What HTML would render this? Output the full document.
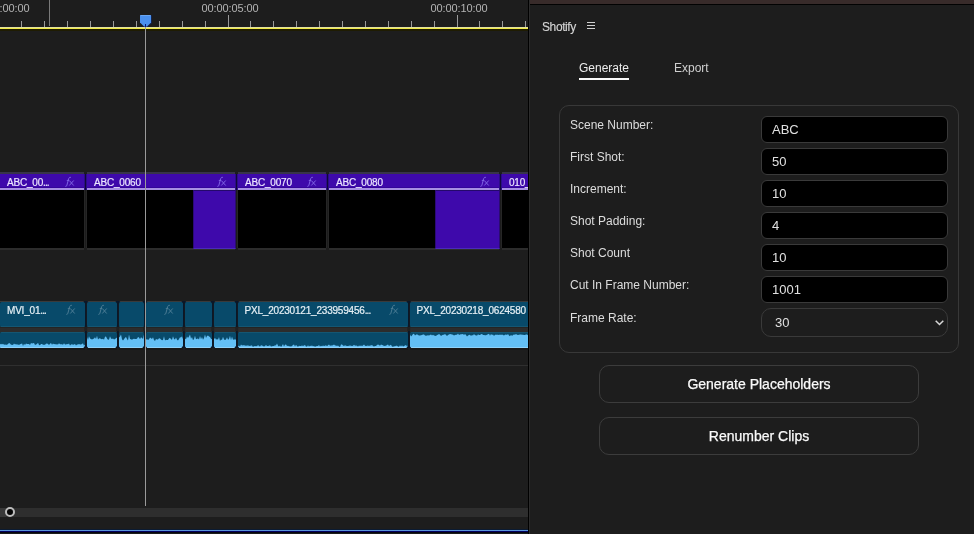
<!DOCTYPE html>
<html><head><meta charset="utf-8">
<style>
*{margin:0;padding:0;box-sizing:border-box}
html,body{width:974px;height:534px;overflow:hidden;background:#1d1d1d;font-family:"Liberation Sans",sans-serif}
.a{position:absolute}
#left{position:absolute;left:0;top:0;width:528px;height:534px;background:#1d1d1d;overflow:hidden}
.tc{position:absolute;top:1px;font-size:11px;letter-spacing:-0.1px;color:#b4b4b4;white-space:nowrap;line-height:14px}
.tick{position:absolute;top:21px;width:1px;height:6px;background:#9a9a9a}
.yl{position:absolute;left:0;top:27px;width:528px;height:2px;background:#f0eb48;border-top:1px solid #e2e0a0}
.yl2{position:absolute;left:0;top:29px;width:528px;height:2px;background:#1f1c02}
.vclip{position:absolute;top:172px;height:78px}
.vh{position:absolute;left:0;right:0;top:0;height:2px;background:#38344a}
.vhead{position:absolute;left:0;right:0;top:2px;height:14px;background:#3e09ab;border-bottom:1px solid #34049a}
.vstripe{position:absolute;left:0;right:0;top:16px;height:2px;background:#a78fe2}
.vbody{position:absolute;left:0;right:0;top:18px;height:58px;background:#000}
.vbot{position:absolute;left:0;right:0;top:76px;height:2px;background:#2c2c2c}
.lbl{position:absolute;top:4px;font-size:10px;color:#ece6ff;-webkit-text-stroke:0.2px #ece6ff;white-space:nowrap;line-height:13px;letter-spacing:-0.2px}.dots{letter-spacing:-0.9px}
.fx{position:absolute;top:2px;font-style:italic;font-size:11px;line-height:14px;color:#7c66cc}
.vsep{position:absolute;top:172px;height:78px;width:3px;background:#1d1d1d}.vs1{position:absolute;left:0;top:2px;width:3px;height:16px;background:#2a0d86}.vs1:after{content:"";position:absolute;left:1px;top:0;width:1px;height:16px;background:#12073a}.vs2{position:absolute;left:0;top:18px;width:3px;height:58px;background:#262626}.vs2:after{content:"";position:absolute;left:1px;top:0;width:1px;height:58px;background:#1c1c1c}
.aclip{position:absolute;top:301px;height:48px}
.atop{position:absolute;left:0;right:0;top:0;height:1px;background:#3a3a3a}
.ahead{position:absolute;left:0;right:0;top:1px;height:25px;background:#084a6a;border-bottom:1px solid #155672;border-radius:1.5px}
.agap{position:absolute;left:0;right:0;top:26px;height:5px;background:#2c2c2c;border-top:1px solid #242424}
.awave{position:absolute;left:0;right:0;top:31px;height:16px;background:#084a6a;overflow:hidden;border-top:1px solid #155672;border-radius:1.5px}.abot{position:absolute;left:0;right:0;top:47px;height:2px;background:#181818}
.alb{position:absolute;top:3px;font-size:10px;color:#e6f0f5;-webkit-text-stroke:0.2px #e6f0f5;white-space:nowrap;line-height:13px;letter-spacing:-0.2px}
.afx{position:absolute;top:3px;font-style:italic;font-size:11px;line-height:14px;color:#5a8aa3}
.asep{position:absolute;top:301px;height:47px;width:2px;background:#0b1a2c}
.lab{position:absolute;left:42px;font-size:12px;color:#dcdcdc;line-height:14px;white-space:nowrap}
.inp{position:absolute;left:233px;width:187px;height:27px;background:#000;border:1px solid #3a3a3a;border-radius:6px;font-size:13px;color:#e0e0e0;padding-left:10px;line-height:25px}
.btn{position:absolute;left:71px;width:320px;height:38px;border:1px solid #3c3c3c;border-radius:10px;font-size:14px;color:#fafafa;-webkit-text-stroke:0.25px #fafafa;text-align:center;line-height:36px}
</style></head><body><div id="root" style="position:absolute;left:0;top:0;width:974px;height:534px;will-change:transform;background:#1d1d1d">
<div id="left">
  <div class="tc" style="left:-27.6px">00:00:00:00</div>
  <div class="tc" style="left:201.5px">00:00:05:00</div>
  <div class="tc" style="left:430.5px">00:00:10:00</div>
  <div class="tick" style="left:21px;"></div><div class="tick" style="left:44px;"></div><div class="tick" style="left:67px;"></div><div class="tick" style="left:90px;"></div><div class="tick" style="left:113px;"></div><div class="tick" style="left:136px;"></div><div class="tick" style="left:159px;"></div><div class="tick" style="left:182px;"></div><div class="tick" style="left:205px;"></div><div class="tick" style="left:228px;top:15px;height:12px;"></div><div class="tick" style="left:250px;"></div><div class="tick" style="left:273px;"></div><div class="tick" style="left:296px;"></div><div class="tick" style="left:319px;"></div><div class="tick" style="left:342px;"></div><div class="tick" style="left:365px;"></div><div class="tick" style="left:388px;"></div><div class="tick" style="left:411px;"></div><div class="tick" style="left:434px;"></div><div class="tick" style="left:457px;top:15px;height:12px;"></div><div class="tick" style="left:479px;"></div><div class="tick" style="left:502px;"></div><div class="tick" style="left:525px;"></div>
  <div class="a" style="left:49px;top:0;width:1px;height:26px;background:#7a7a7a"></div>
  <div class="yl"></div><div class="yl2"></div>
  <div class="vclip" style="left:0px;width:84px"><div class="vh"></div><div class="vhead"></div><div class="vstripe"></div><div class="vbody"></div><div class="vbot"></div><div class="lbl" style="left:7px">ABC_00<span class="dots">...</span></div><svg class="a" style="left:64.0px;top:4px" width="11" height="12" viewBox="0 0 11 12"><path d="M6.9 1.3 Q5.2 0.9 4.7 2.6 L2.9 9.2 Q2.5 10.6 1.4 10.4 M2.8 4.4 H5 M5.3 4.5 L9.7 9.5 M9.7 4.5 L5.3 9.5" stroke="#8266e6" stroke-width="0.95" fill="none"/></svg></div><div class="vclip" style="left:87px;width:148px"><div class="vh"></div><div class="vhead"></div><div class="vstripe"></div><div class="vbody"></div><div class="vbot"></div><div class="lbl" style="left:7px">ABC_0060</div><svg class="a" style="left:128.5px;top:4px" width="11" height="12" viewBox="0 0 11 12"><path d="M6.9 1.3 Q5.2 0.9 4.7 2.6 L2.9 9.2 Q2.5 10.6 1.4 10.4 M2.8 4.4 H5 M5.3 4.5 L9.7 9.5 M9.7 4.5 L5.3 9.5" stroke="#8266e6" stroke-width="0.95" fill="none"/></svg></div><div class="vclip" style="left:238px;width:88px"><div class="vh"></div><div class="vhead"></div><div class="vstripe"></div><div class="vbody"></div><div class="vbot"></div><div class="lbl" style="left:7px">ABC_0070</div><svg class="a" style="left:67.9px;top:4px" width="11" height="12" viewBox="0 0 11 12"><path d="M6.9 1.3 Q5.2 0.9 4.7 2.6 L2.9 9.2 Q2.5 10.6 1.4 10.4 M2.8 4.4 H5 M5.3 4.5 L9.7 9.5 M9.7 4.5 L5.3 9.5" stroke="#8266e6" stroke-width="0.95" fill="none"/></svg></div><div class="vclip" style="left:329px;width:170px"><div class="vh"></div><div class="vhead"></div><div class="vstripe"></div><div class="vbody"></div><div class="vbot"></div><div class="lbl" style="left:7px">ABC_0080</div><svg class="a" style="left:150.0px;top:4px" width="11" height="12" viewBox="0 0 11 12"><path d="M6.9 1.3 Q5.2 0.9 4.7 2.6 L2.9 9.2 Q2.5 10.6 1.4 10.4 M2.8 4.4 H5 M5.3 4.5 L9.7 9.5 M9.7 4.5 L5.3 9.5" stroke="#8266e6" stroke-width="0.95" fill="none"/></svg></div><div class="vclip" style="left:502px;width:38px"><div class="vh"></div><div class="vhead"></div><div class="vstripe"></div><div class="vbody"></div><div class="vbot"></div><div class="lbl" style="left:7px">010_0090</div></div><div class="vsep" style="left:84px"><div class="vs1"></div><div class="vs2"></div></div><div class="vsep" style="left:235px"><div class="vs1"></div><div class="vs2"></div></div><div class="vsep" style="left:326px"><div class="vs1"></div><div class="vs2"></div></div><div class="vsep" style="left:499px"><div class="vs1"></div><div class="vs2"></div></div><div class="a" style="left:193px;top:190px;width:43px;height:59px;background:#3e09ab;border-left:1px solid #2c0a78;border-top:1px solid #24086a;border-right:1px solid #2a0c70;border-bottom:1px solid #4a2abb"></div><div class="a" style="left:435px;top:190px;width:65px;height:59px;background:#3e09ab;border-left:1px solid #2c0a78;border-top:1px solid #24086a;border-right:1px solid #2a0c70;border-bottom:1px solid #4a2abb"></div>
  <div class="aclip" style="left:0.0px;width:85.0px"><div class="atop"></div><div class="ahead"></div><div class="agap"></div><div class="awave"><svg width="85.0" height="16" style="position:absolute;left:0;top:-1px"><path d="M0 16 L0.0 12.4 L1.0 11.7 L2.0 12.4 L3.0 11.7 L4.0 12.7 L5.0 12.6 L6.0 12.8 L7.0 12.7 L8.0 12.1 L9.0 10.9 L10.0 11.6 L11.0 12.8 L12.0 12.8 L13.0 13.1 L14.0 11.6 L15.0 12.4 L16.0 12.1 L17.0 12.7 L18.0 12.2 L19.0 13.3 L20.0 12.0 L21.0 12.2 L22.0 11.3 L23.0 13.9 L24.0 11.7 L25.0 13.0 L26.0 11.6 L27.0 12.0 L28.0 12.0 L29.0 12.1 L30.0 13.0 L31.0 11.1 L32.0 11.6 L33.0 11.2 L34.0 11.0 L35.0 13.0 L36.0 12.6 L37.0 11.9 L38.0 10.8 L39.0 13.1 L40.0 13.2 L41.0 11.9 L42.0 12.1 L43.0 12.7 L44.0 12.7 L45.0 12.8 L46.0 11.8 L47.0 11.6 L48.0 12.1 L49.0 13.0 L50.0 11.8 L51.0 11.0 L52.0 12.7 L53.0 11.5 L54.0 12.3 L55.0 12.1 L56.0 12.6 L57.0 12.3 L58.0 12.6 L59.0 11.3 L60.0 12.3 L61.0 12.3 L62.0 12.3 L63.0 12.7 L64.0 11.3 L65.0 12.6 L66.0 12.4 L67.0 12.0 L68.0 12.2 L69.0 11.4 L70.0 13.5 L71.0 12.4 L72.0 12.3 L73.0 12.7 L74.0 12.6 L75.0 12.1 L76.0 13.5 L77.0 12.4 L78.0 12.5 L79.0 12.1 L80.0 12.6 L81.0 12.5 L82.0 12.1 L83.0 11.3 L84.0 13.7 L85.0 12.4 L85 16 Z" fill="#63bff5"/><rect x="0" y="15" width="85.0" height="1" fill="#8fd2fa"/></svg></div><div class="abot"></div><div class="alb" style="left:7px">MVI_01<span class="dots">...</span></div><svg class="a" style="left:65.4px;top:3.4px" width="11" height="12" viewBox="0 0 11 12"><path d="M6.9 1.3 Q5.2 0.9 4.7 2.6 L2.9 9.2 Q2.5 10.6 1.4 10.4 M2.8 4.4 H5 M5.3 4.5 L9.7 9.5 M9.7 4.5 L5.3 9.5" stroke="#4e7d96" stroke-width="0.95" fill="none"/></svg></div><div class="aclip" style="left:86.5px;width:30.5px"><div class="atop"></div><div class="ahead"></div><div class="agap"></div><div class="awave"><svg width="30.5" height="16" style="position:absolute;left:0;top:-1px"><path d="M0 16 L0.0 5.0 L1.0 7.9 L2.0 4.2 L3.0 6.6 L4.0 7.1 L5.0 7.6 L6.0 7.0 L7.0 6.6 L8.0 5.3 L9.0 6.9 L10.0 3.8 L11.0 7.4 L12.0 6.4 L13.0 6.3 L14.0 7.1 L15.0 7.3 L16.0 6.7 L17.0 7.7 L18.0 4.7 L19.0 4.4 L20.0 6.5 L21.0 7.7 L22.0 7.6 L23.0 4.3 L24.0 6.6 L25.0 7.1 L26.0 6.6 L27.0 7.4 L28.0 7.1 L29.0 6.3 L30.0 5.6 L30 16 Z" fill="#63bff5"/><rect x="0" y="15" width="30.5" height="1" fill="#8fd2fa"/></svg></div><div class="abot"></div><svg class="a" style="left:10.6px;top:3.4px" width="11" height="12" viewBox="0 0 11 12"><path d="M6.9 1.3 Q5.2 0.9 4.7 2.6 L2.9 9.2 Q2.5 10.6 1.4 10.4 M2.8 4.4 H5 M5.3 4.5 L9.7 9.5 M9.7 4.5 L5.3 9.5" stroke="#4e7d96" stroke-width="0.95" fill="none"/></svg></div><div class="aclip" style="left:118.5px;width:25.5px"><div class="atop"></div><div class="ahead"></div><div class="agap"></div><div class="awave"><svg width="25.5" height="16" style="position:absolute;left:0;top:-1px"><path d="M0 16 L0.0 5.5 L1.0 4.5 L2.0 2.5 L3.0 7.3 L4.0 8.5 L5.0 7.3 L6.0 5.7 L7.0 5.1 L8.0 7.1 L9.0 8.6 L10.0 2.5 L11.0 7.0 L12.0 7.3 L13.0 7.8 L14.0 6.9 L15.0 6.8 L16.0 7.1 L17.0 7.1 L18.0 6.8 L19.0 5.1 L20.0 5.4 L21.0 7.2 L22.0 5.2 L23.0 5.9 L24.0 7.1 L25.0 2.6 L25 16 Z" fill="#63bff5"/><rect x="0" y="15" width="25.5" height="1" fill="#8fd2fa"/></svg></div><div class="abot"></div></div><div class="aclip" style="left:145.5px;width:37.5px"><div class="atop"></div><div class="ahead"></div><div class="agap"></div><div class="awave"><svg width="37.5" height="16" style="position:absolute;left:0;top:-1px"><path d="M0 16 L0.0 7.7 L1.0 6.9 L2.0 7.9 L3.0 7.3 L4.0 5.4 L5.0 6.3 L6.0 7.0 L7.0 5.3 L8.0 7.9 L9.0 9.1 L10.0 7.1 L11.0 7.5 L12.0 7.5 L13.0 6.2 L14.0 6.4 L15.0 7.6 L16.0 8.3 L17.0 7.9 L18.0 4.3 L19.0 8.6 L20.0 7.8 L21.0 8.0 L22.0 8.1 L23.0 6.4 L24.0 5.8 L25.0 7.3 L26.0 7.7 L27.0 4.2 L28.0 6.9 L29.0 7.4 L30.0 5.6 L31.0 7.8 L32.0 8.4 L33.0 7.1 L34.0 5.2 L35.0 5.4 L36.0 4.3 L37.0 7.3 L37 16 Z" fill="#63bff5"/><rect x="0" y="15" width="37.5" height="1" fill="#8fd2fa"/></svg></div><div class="abot"></div><svg class="a" style="left:17.7px;top:3.4px" width="11" height="12" viewBox="0 0 11 12"><path d="M6.9 1.3 Q5.2 0.9 4.7 2.6 L2.9 9.2 Q2.5 10.6 1.4 10.4 M2.8 4.4 H5 M5.3 4.5 L9.7 9.5 M9.7 4.5 L5.3 9.5" stroke="#4e7d96" stroke-width="0.95" fill="none"/></svg></div><div class="aclip" style="left:184.5px;width:27.5px"><div class="atop"></div><div class="ahead"></div><div class="agap"></div><div class="awave"><svg width="27.5" height="16" style="position:absolute;left:0;top:-1px"><path d="M0 16 L0.0 6.6 L1.0 7.3 L2.0 4.6 L3.0 6.1 L4.0 4.4 L5.0 2.5 L6.0 6.8 L7.0 5.1 L8.0 8.3 L9.0 6.9 L10.0 3.8 L11.0 7.2 L12.0 6.7 L13.0 6.6 L14.0 7.4 L15.0 3.9 L16.0 7.2 L17.0 5.0 L18.0 7.7 L19.0 6.1 L20.0 2.6 L21.0 6.0 L22.0 4.0 L23.0 3.6 L24.0 4.5 L25.0 5.0 L26.0 6.8 L27.0 7.2 L27 16 Z" fill="#63bff5"/><rect x="0" y="15" width="27.5" height="1" fill="#8fd2fa"/></svg></div><div class="abot"></div></div><div class="aclip" style="left:213.5px;width:22.5px"><div class="atop"></div><div class="ahead"></div><div class="agap"></div><div class="awave"><svg width="22.5" height="16" style="position:absolute;left:0;top:-1px"><path d="M0 16 L0.0 7.3 L1.0 5.7 L2.0 7.7 L3.0 7.0 L4.0 7.8 L5.0 5.0 L6.0 9.0 L7.0 7.4 L8.0 7.9 L9.0 4.8 L10.0 7.4 L11.0 8.1 L12.0 7.5 L13.0 5.2 L14.0 7.8 L15.0 6.9 L16.0 3.7 L17.0 8.3 L18.0 4.5 L19.0 7.7 L20.0 7.6 L21.0 7.4 L22.0 7.4 L22 16 Z" fill="#63bff5"/><rect x="0" y="15" width="22.5" height="1" fill="#8fd2fa"/></svg></div><div class="abot"></div></div><div class="aclip" style="left:237.5px;width:170.5px"><div class="atop"></div><div class="ahead"></div><div class="agap"></div><div class="awave"><svg width="170.5" height="16" style="position:absolute;left:0;top:-1px"><path d="M0 16 L0.0 14.2 L1.0 13.4 L2.0 14.6 L3.0 12.6 L4.0 13.6 L5.0 13.3 L6.0 13.3 L7.0 13.6 L8.0 13.7 L9.0 13.5 L10.0 13.5 L11.0 13.8 L12.0 14.0 L13.0 13.5 L14.0 13.5 L15.0 15.0 L16.0 13.9 L17.0 14.3 L18.0 14.1 L19.0 14.2 L20.0 13.0 L21.0 13.9 L22.0 14.4 L23.0 13.3 L24.0 13.6 L25.0 14.1 L26.0 14.5 L27.0 13.9 L28.0 12.9 L29.0 14.1 L30.0 14.0 L31.0 13.7 L32.0 13.2 L33.0 14.5 L34.0 14.3 L35.0 14.0 L36.0 14.0 L37.0 13.3 L38.0 13.6 L39.0 11.6 L40.0 13.8 L41.0 14.6 L42.0 13.6 L43.0 15.0 L44.0 13.7 L45.0 12.1 L46.0 14.4 L47.0 12.7 L48.0 12.6 L49.0 14.0 L50.0 13.8 L51.0 14.3 L52.0 14.2 L53.0 14.6 L54.0 13.9 L55.0 13.1 L56.0 12.5 L57.0 14.5 L58.0 12.8 L59.0 14.0 L60.0 14.8 L61.0 13.7 L62.0 14.0 L63.0 13.9 L64.0 13.5 L65.0 13.9 L66.0 13.4 L67.0 13.1 L68.0 14.5 L69.0 14.5 L70.0 13.2 L71.0 14.4 L72.0 13.8 L73.0 14.1 L74.0 13.6 L75.0 14.2 L76.0 13.9 L77.0 14.7 L78.0 14.3 L79.0 14.1 L80.0 13.9 L81.0 13.0 L82.0 14.5 L83.0 13.7 L84.0 14.2 L85.0 13.4 L86.0 14.0 L87.0 13.7 L88.0 13.2 L89.0 14.3 L90.0 13.2 L91.0 12.5 L92.0 13.7 L93.0 13.5 L94.0 13.4 L95.0 13.2 L96.0 12.5 L97.0 13.6 L98.0 13.5 L99.0 14.0 L100.0 13.6 L101.0 14.4 L102.0 14.9 L103.0 12.5 L104.0 12.4 L105.0 13.5 L106.0 14.0 L107.0 13.3 L108.0 13.8 L109.0 13.9 L110.0 14.0 L111.0 13.7 L112.0 13.5 L113.0 13.8 L114.0 14.0 L115.0 13.7 L116.0 12.7 L117.0 13.7 L118.0 13.6 L119.0 13.8 L120.0 14.4 L121.0 13.4 L122.0 13.9 L123.0 13.5 L124.0 14.0 L125.0 13.5 L126.0 12.6 L127.0 13.7 L128.0 13.9 L129.0 13.7 L130.0 13.6 L131.0 14.0 L132.0 13.5 L133.0 13.5 L134.0 13.1 L135.0 14.1 L136.0 14.5 L137.0 13.9 L138.0 13.9 L139.0 12.9 L140.0 12.6 L141.0 12.9 L142.0 13.7 L143.0 12.6 L144.0 12.9 L145.0 13.2 L146.0 14.1 L147.0 13.7 L148.0 13.7 L149.0 12.9 L150.0 12.5 L151.0 13.9 L152.0 13.2 L153.0 12.7 L154.0 14.4 L155.0 14.7 L156.0 14.2 L157.0 14.3 L158.0 13.8 L159.0 13.7 L160.0 14.4 L161.0 14.8 L162.0 13.2 L163.0 14.6 L164.0 13.2 L165.0 14.6 L166.0 14.0 L167.0 13.6 L168.0 13.1 L169.0 14.4 L170.0 13.4 L170 16 Z" fill="#63bff5"/><rect x="0" y="15" width="170.5" height="1" fill="#8fd2fa"/></svg></div><div class="abot"></div><div class="alb" style="left:7px">PXL_20230121_233959456<span class="dots">...</span></div><svg class="a" style="left:150.7px;top:3.4px" width="11" height="12" viewBox="0 0 11 12"><path d="M6.9 1.3 Q5.2 0.9 4.7 2.6 L2.9 9.2 Q2.5 10.6 1.4 10.4 M2.8 4.4 H5 M5.3 4.5 L9.7 9.5 M9.7 4.5 L5.3 9.5" stroke="#4e7d96" stroke-width="0.95" fill="none"/></svg></div><div class="aclip" style="left:409.5px;width:130.5px"><div class="atop"></div><div class="ahead"></div><div class="agap"></div><div class="awave"><svg width="130.5" height="16" style="position:absolute;left:0;top:-1px"><path d="M0 16 L0.0 2.6 L1.0 4.5 L2.0 3.5 L3.0 1.9 L4.0 1.7 L5.0 3.4 L6.0 2.8 L7.0 2.3 L8.0 3.0 L9.0 3.4 L10.0 3.5 L11.0 3.2 L12.0 3.1 L13.0 2.5 L14.0 2.6 L15.0 3.6 L16.0 3.7 L17.0 3.4 L18.0 3.2 L19.0 3.6 L20.0 3.0 L21.0 2.4 L22.0 3.4 L23.0 2.8 L24.0 3.5 L25.0 3.8 L26.0 4.1 L27.0 3.1 L28.0 2.7 L29.0 2.1 L30.0 2.8 L31.0 4.0 L32.0 3.2 L33.0 2.8 L34.0 2.7 L35.0 2.0 L36.0 3.0 L37.0 3.9 L38.0 3.0 L39.0 2.5 L40.0 1.9 L41.0 2.3 L42.0 2.6 L43.0 2.7 L44.0 3.5 L45.0 2.9 L46.0 2.7 L47.0 2.8 L48.0 1.6 L49.0 3.1 L50.0 2.5 L51.0 2.3 L52.0 2.2 L53.0 1.9 L54.0 3.0 L55.0 2.1 L56.0 3.1 L57.0 4.4 L58.0 3.5 L59.0 3.0 L60.0 2.8 L61.0 4.1 L62.0 2.9 L63.0 3.6 L64.0 2.0 L65.0 3.2 L66.0 3.3 L67.0 3.8 L68.0 2.2 L69.0 2.9 L70.0 2.9 L71.0 2.2 L72.0 2.1 L73.0 3.0 L74.0 2.9 L75.0 3.3 L76.0 3.3 L77.0 2.7 L78.0 2.3 L79.0 1.8 L80.0 3.7 L81.0 2.0 L82.0 3.1 L83.0 2.5 L84.0 4.0 L85.0 2.8 L86.0 2.8 L87.0 2.8 L88.0 2.8 L89.0 2.9 L90.0 2.5 L91.0 3.0 L92.0 2.5 L93.0 3.0 L94.0 3.6 L95.0 2.7 L96.0 2.6 L97.0 3.0 L98.0 2.1 L99.0 3.4 L100.0 4.2 L101.0 2.7 L102.0 3.9 L103.0 3.1 L104.0 2.6 L105.0 2.8 L106.0 2.0 L107.0 2.7 L108.0 3.1 L109.0 2.8 L110.0 2.5 L111.0 2.6 L112.0 2.7 L113.0 2.8 L114.0 3.1 L115.0 3.0 L116.0 2.6 L117.0 2.5 L118.0 3.3 L119.0 3.3 L120.0 4.1 L121.0 3.0 L122.0 2.7 L123.0 3.0 L124.0 2.0 L125.0 2.6 L126.0 2.6 L127.0 3.3 L128.0 2.9 L129.0 2.1 L130.0 2.8 L130 16 Z" fill="#63bff5"/><rect x="0" y="15" width="130.5" height="1" fill="#8fd2fa"/></svg></div><div class="abot"></div><div class="alb" style="left:7px">PXL_20230218_0624580</div></div><svg class="a" style="left:79px;top:300px" width="12" height="50" viewBox="79.00 300 12 50"><rect x="85.00" y="301" width="1.5" height="47" fill="#0a1728"/><path d="M83.25 301 h5 l-2.5 3 z M83.25 348 h5 l-2.5 -3 z" fill="#0a1728"/><rect x="84.25" y="327" width="3" height="4" fill="#202020"/></svg><svg class="a" style="left:111px;top:300px" width="12" height="50" viewBox="111.00 300 12 50"><rect x="117.00" y="301" width="1.5" height="47" fill="#0a1728"/><path d="M115.25 301 h5 l-2.5 3 z M115.25 348 h5 l-2.5 -3 z" fill="#0a1728"/><rect x="116.25" y="327" width="3" height="4" fill="#202020"/></svg><svg class="a" style="left:138px;top:300px" width="12" height="50" viewBox="138.00 300 12 50"><rect x="144.00" y="301" width="1.5" height="47" fill="#0a1728"/><path d="M142.25 301 h5 l-2.5 3 z M142.25 348 h5 l-2.5 -3 z" fill="#0a1728"/><rect x="143.25" y="327" width="3" height="4" fill="#202020"/></svg><svg class="a" style="left:177px;top:300px" width="12" height="50" viewBox="177.00 300 12 50"><rect x="183.00" y="301" width="1.5" height="47" fill="#0a1728"/><path d="M181.25 301 h5 l-2.5 3 z M181.25 348 h5 l-2.5 -3 z" fill="#0a1728"/><rect x="182.25" y="327" width="3" height="4" fill="#202020"/></svg><svg class="a" style="left:206px;top:300px" width="12" height="50" viewBox="206.00 300 12 50"><rect x="212.00" y="301" width="1.5" height="47" fill="#0a1728"/><path d="M210.25 301 h5 l-2.5 3 z M210.25 348 h5 l-2.5 -3 z" fill="#0a1728"/><rect x="211.25" y="327" width="3" height="4" fill="#202020"/></svg><svg class="a" style="left:230px;top:300px" width="12" height="50" viewBox="230.00 300 12 50"><rect x="236.00" y="301" width="1.5" height="47" fill="#0a1728"/><path d="M234.25 301 h5 l-2.5 3 z M234.25 348 h5 l-2.5 -3 z" fill="#0a1728"/><rect x="235.25" y="327" width="3" height="4" fill="#202020"/></svg><svg class="a" style="left:402px;top:300px" width="12" height="50" viewBox="402.00 300 12 50"><rect x="408.00" y="301" width="1.5" height="47" fill="#0a1728"/><path d="M406.25 301 h5 l-2.5 3 z M406.25 348 h5 l-2.5 -3 z" fill="#0a1728"/><rect x="407.25" y="327" width="3" height="4" fill="#202020"/></svg>
  <div class="a" style="left:0;top:365px;width:528px;height:1px;background:#2f2f2f"></div>
  <div class="a" style="left:145px;top:27px;width:1px;height:479px;background:#9a9a9a"></div>
  <svg class="a" style="left:139px;top:14px" width="16" height="16" viewBox="0 0 16 16"><path d="M2.2 2 Q2.2 1.2 3 1.2 H12.2 Q13 1.2 13 2 V9 L9 13 H6 L2 9 Z" fill="#0b2a7a" opacity="0.5"/><path d="M1 1.8 Q1 1 1.8 1 H11.2 Q12 1 12 1.8 V8.5 L8 12.4 H5 L1 8.5 Z" fill="#4a90ee"/><rect x="1.5" y="1" width="10" height="1" fill="#6aa6f2"/><rect x="6" y="10" width="1" height="3" fill="#0a1a80"/></svg>
  <div class="a" style="left:0;top:508px;width:528px;height:9px;background:#2e2e2e"></div>
  <div class="a" style="left:0;top:508px;width:6px;height:9px;background:#383838"></div><div class="a" style="left:5px;top:507.4px;width:10px;height:10px;border-radius:50%;border:2px solid #bdbdbd;background:#050505"></div>
  <div class="a" style="left:0;top:529px;width:528px;height:1px;background:#0b1b32"></div><div class="a" style="left:0;top:530px;width:528px;height:1px;background:#5a94dc"></div><div class="a" style="left:0;top:531px;width:528px;height:1px;background:#00005e"></div><div class="a" style="left:0;top:532px;width:528px;height:1px;background:#06060e"></div>
</div>
<div class="a" style="left:528px;top:0;width:1px;height:534px;background:#000"></div>
<div class="a" style="left:529px;top:0;width:1px;height:534px;background:#2c2c2c"></div>
<div class="a" style="left:530px;top:0;width:444px;height:4px;background:#382b2a"></div>
<div class="a" style="left:530px;top:4px;width:444px;height:1px;background:#020202"></div>

<div class="a" style="left:542px;top:19.5px;font-size:12px;letter-spacing:-0.4px;-webkit-text-stroke:0.12px #d6d6d6;color:#d6d6d6;line-height:14px">Shotify</div>
<div class="a" style="left:587px;top:22px;width:8px;height:1px;background:#d0d0d0"></div>
<div class="a" style="left:587px;top:25px;width:8px;height:1px;background:#d0d0d0"></div>
<div class="a" style="left:587px;top:28px;width:8px;height:1px;background:#d0d0d0"></div>

<div class="a" style="left:579px;top:61px;font-size:12px;color:#ececec;line-height:14px">Generate</div>
<div class="a" style="left:579px;top:78px;width:50px;height:2px;background:#fafafa"></div>
<div class="a" style="left:674px;top:61px;font-size:12px;color:#cfcfcf;line-height:14px">Export</div>

<div class="a" style="left:559px;top:105px;width:400px;height:248px;border:1px solid #383838;border-radius:10px"></div>
<div class="a" style="left:528px;top:0;width:446px;height:534px">
  <div class="lab" style="top:118px">Scene Number:</div>
  <div class="lab" style="top:150px">First Shot:</div>
  <div class="lab" style="top:182px">Increment:</div>
  <div class="lab" style="top:214px">Shot Padding:</div>
  <div class="lab" style="top:246px">Shot Count</div>
  <div class="lab" style="top:278px">Cut In Frame Number:</div>
  <div class="lab" style="top:311px">Frame Rate:</div>
  <div class="inp" style="top:116px">ABC</div>
  <div class="inp" style="top:148px">50</div>
  <div class="inp" style="top:180px">10</div>
  <div class="inp" style="top:212px">4</div>
  <div class="inp" style="top:244px">10</div>
  <div class="inp" style="top:276px">1001</div>
  <div class="inp" style="top:308px;height:29px;background:#1d1d1d;border-radius:10px;padding-left:13px;line-height:27px">30
    <svg class="a" style="right:2px;top:10px" width="11" height="8" viewBox="0 0 11 8"><path d="M1.7 1.7 L5.5 5.5 L9.3 1.7" stroke="#d8d8d8" stroke-width="1.5" fill="none"/></svg></div>
  <div class="btn" style="top:365px">Generate Placeholders</div>
  <div class="btn" style="top:417px">Renumber Clips</div>
</div>
</div></body></html>
